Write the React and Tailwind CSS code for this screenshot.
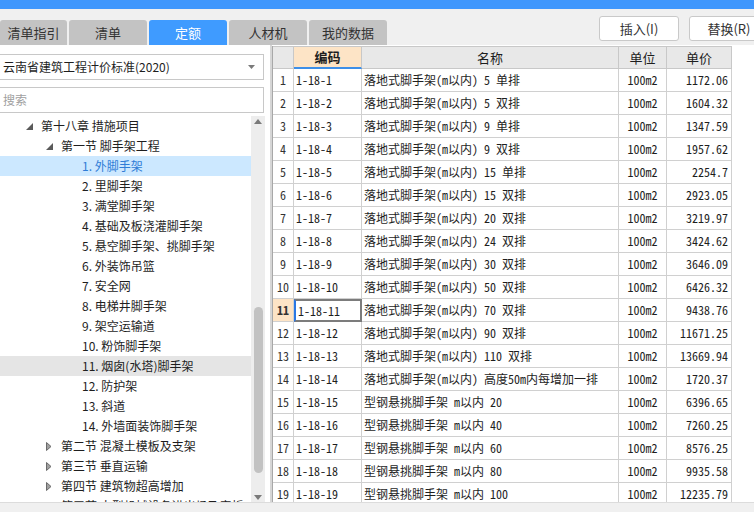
import React from 'react';

const tabs = [
  { label: '清单指引', w: 'w-[67px]' },
  { label: '清单', w: 'w-[78px]' },
  { label: '定额', w: 'w-[78px]', active: true },
  { label: '人材机', w: 'w-[78px]' },
  { label: '我的数据', w: 'w-[78px]' },
];

const items = [
  '1. 外脚手架',
  '2. 里脚手架',
  '3. 满堂脚手架',
  '4. 基础及板浇灌脚手架',
  '5. 悬空脚手架、挑脚手架',
  '6. 外装饰吊篮',
  '7. 安全网',
  '8. 电梯井脚手架',
  '9. 架空运输道',
  '10. 粉饰脚手架',
  '11. 烟囱(水塔)脚手架',
  '12. 防护架',
  '13. 斜道',
  '14. 外墙面装饰脚手架',
];

const sections = ['第二节 混凝土模板及支架', '第三节 垂直运输', '第四节 建筑物超高增加', '第五节 大型机械设备进出场及安拆'];

const rows = [
  ['1-18-1', '落地式脚手架(m以内) 5 单排', '1172.06'],
  ['1-18-2', '落地式脚手架(m以内) 5 双排', '1604.32'],
  ['1-18-3', '落地式脚手架(m以内) 9 单排', '1347.59'],
  ['1-18-4', '落地式脚手架(m以内) 9 双排', '1957.62'],
  ['1-18-5', '落地式脚手架(m以内) 15 单排', '2254.7'],
  ['1-18-6', '落地式脚手架(m以内) 15 双排', '2923.05'],
  ['1-18-7', '落地式脚手架(m以内) 20 双排', '3219.97'],
  ['1-18-8', '落地式脚手架(m以内) 24 双排', '3424.62'],
  ['1-18-9', '落地式脚手架(m以内) 30 双排', '3646.09'],
  ['1-18-10', '落地式脚手架(m以内) 50 双排', '6426.32'],
  ['1-18-11', '落地式脚手架(m以内) 70 双排', '9438.76'],
  ['1-18-12', '落地式脚手架(m以内) 90 双排', '11671.25'],
  ['1-18-13', '落地式脚手架(m以内) 110 双排', '13669.94'],
  ['1-18-14', '落地式脚手架(m以内) 高度50m内每增加一排', '1720.37'],
  ['1-18-15', '型钢悬挑脚手架 m以内 20', '6396.65'],
  ['1-18-16', '型钢悬挑脚手架 m以内 40', '7260.25'],
  ['1-18-17', '型钢悬挑脚手架 m以内 60', '8576.25'],
  ['1-18-18', '型钢悬挑脚手架 m以内 80', '9935.58'],
  ['1-18-19', '型钢悬挑脚手架 m以内 100', '12235.79'],
];

const Expanded = () => (
  <svg width="7" height="7" viewBox="0 0 7 7">
    <polygon points="7,0 7,7 0,7" fill="#5a5a5a" />
  </svg>
);

const Collapsed = () => (
  <svg width="6" height="9" viewBox="0 0 6 9">
    <polygon points="0.5,0.5 5,4.5 0.5,8.5" fill="#a0a0a0" stroke="#6a6a6a" strokeWidth="1" />
  </svg>
);

const mono = "font-['Noto_Sans_Mono_CJK_SC','Noto_Sans_CJK_SC',monospace]";

export default function App() {
  return (
    <div className="w-[754px] h-[512px] bg-[#f0f0f0] overflow-hidden flex flex-col font-['Noto_Sans_CJK_SC',sans-serif] text-[12px] text-[#1e1e1e]">
      {/* title strip */}
      <div className="h-[9px] bg-[#3f97fd] shrink-0" />

      {/* tabs + buttons */}
      <div className="h-[36px] shrink-0 flex justify-between">
        <div className="flex gap-[2px] mt-[11px]">
          {tabs.map((t) => (
            <div
              key={t.label}
              className={`${t.w} h-[25px] flex items-center justify-center rounded-t-[3px] text-[13px] ${
                t.active ? 'bg-[#3f9bff] text-white' : 'bg-[#c3c3c3] text-[#333]'
              }`}
            >
              {t.label}
            </div>
          ))}
        </div>
        <div className="flex gap-[10px] mt-[7px] mr-[-15px]">
          <button className="w-[80px] h-[25px] bg-white border border-[#c9c9c9] rounded-[3px] text-[13px] text-[#333]">插入(I)</button>
          <button className="w-[80px] h-[25px] bg-white border border-[#c9c9c9] rounded-[3px] text-[13px] text-[#333]">替换(R)</button>
        </div>
      </div>

      {/* main */}
      <div className="flex-1 flex min-h-0">
        {/* left panel */}
        <div className="w-[270px] bg-white flex flex-col pt-[9px]">
          <div className="ml-[-1px] w-[265px] h-[26px] border border-[#c8c8c8] flex items-center justify-between pl-[3px] pr-[8px]">
            <span>云南省建筑工程计价标准(2020)</span>
            <svg width="7" height="4" viewBox="0 0 7 4">
              <polygon points="0,0 7,0 3.5,4" fill="#7a7a7a" />
            </svg>
          </div>
          <div className="ml-[-1px] w-[265px] h-[26px] mt-[7px] border border-[#c8c8c8] flex items-center pl-[3px] text-[#a0a0a0]">
            搜索
          </div>
          <div className="flex-1 flex mt-[3px] min-h-0 pr-[5px]">
            <div className="flex-1 overflow-hidden">
              <div className="h-[20px] flex items-center pl-[26px]">
                <span className="w-[15px]"><Expanded /></span>
                <span>第十八章 措施项目</span>
              </div>
              <div className="h-[20px] flex items-center pl-[46px]">
                <span className="w-[15px]"><Expanded /></span>
                <span>第一节 脚手架工程</span>
              </div>
              {items.map((it, i) => (
                <div
                  key={it}
                  className={`h-[20px] flex items-center pl-[82px] ${
                    i === 0 ? 'bg-[#cce8ff] text-[#2f7cd6]' : i === 10 ? 'bg-[#e5e5e5]' : ''
                  }`}
                >
                  {it}
                </div>
              ))}
              {sections.map((s) => (
                <div key={s} className="h-[20px] flex items-center pl-[46px] whitespace-nowrap">
                  <span className="w-[15px]"><Collapsed /></span>
                  <span>{s}</span>
                </div>
              ))}
            </div>
            {/* scrollbar */}
            <div className="w-[14px] bg-[#ededed] flex flex-col items-center">
              <svg className="mt-[3px]" width="8" height="5" viewBox="0 0 8 5">
                <polygon points="4,0 8,5 0,5" fill="#7a7a7a" />
              </svg>
              <div className="h-[183px]" />
              <div className="w-[9px] h-[166px] rounded-full bg-[#c2c2c2]" />
              <div className="flex-1" />
              <svg className="mb-[2px]" width="8" height="5" viewBox="0 0 8 5">
                <polygon points="0,0 8,0 4,5" fill="#7a7a7a" />
              </svg>
            </div>
          </div>
        </div>

        <div className="w-[2px] bg-[#d6d6d6]" />

        {/* table panel */}
        <div className="flex-1 bg-white pt-[1px] overflow-hidden">
          <div className="w-[460px] border-l border-[#a8a8a8]">
            <div className="grid grid-cols-[21px_68px_257px_48px_65px] h-[23px] bg-[#e8e8e8] text-[13px] border-t border-[#c8c8c8]">
              <div className="border-r border-b border-[#c8c8c8]" />
              <div className="border-r border-[#c8c8c8] border-b-2 border-b-[#3d8fe8] bg-[#fde4c6] flex items-center justify-center font-bold">编码</div>
              <div className="border-r border-b border-[#c8c8c8] flex items-center justify-center">名称</div>
              <div className="border-r border-b border-[#c8c8c8] flex items-center justify-center">单位</div>
              <div className="border-r border-b border-[#c8c8c8] flex items-center justify-center">单价</div>
            </div>
            {rows.map((r, i) => {
              const sel = i === 10;
              return (
                <div key={r[0]} className={`grid grid-cols-[21px_68px_257px_48px_65px] h-[23px] ${mono}`}>
                  <div
                    className={`border-r border-b border-[#d0d0d0] flex items-center justify-center text-[#333] ${
                      sel ? 'bg-[#fde4c6] font-bold text-[#111]' : ''
                    }`}
                  >
                    {i + 1}
                  </div>
                  <div
                    className={`flex items-center pl-[2px] whitespace-nowrap ${
                      sel
                        ? 'border-2 border-[#7c7c7c] border-l-[#2a78e4]'
                        : 'border-r border-b border-[#d0d0d0]'
                    }`}
                  >
                    {r[0]}
                  </div>
                  <div className="border-r border-b border-[#d0d0d0] flex items-center pl-[2px] whitespace-nowrap overflow-hidden">{r[1]}</div>
                  <div className="border-r border-b border-[#d0d0d0] flex items-center justify-center">100m2</div>
                  <div className="border-r border-b border-[#d0d0d0] flex items-center justify-end pr-[3px]">{r[2]}</div>
                </div>
              );
            })}
          </div>
        </div>
      </div>

      {/* status strip */}
      <div className="h-[10px] shrink-0 bg-[#f0f0f0] border-t border-[#dcdcdc]" />
    </div>
  );
}
